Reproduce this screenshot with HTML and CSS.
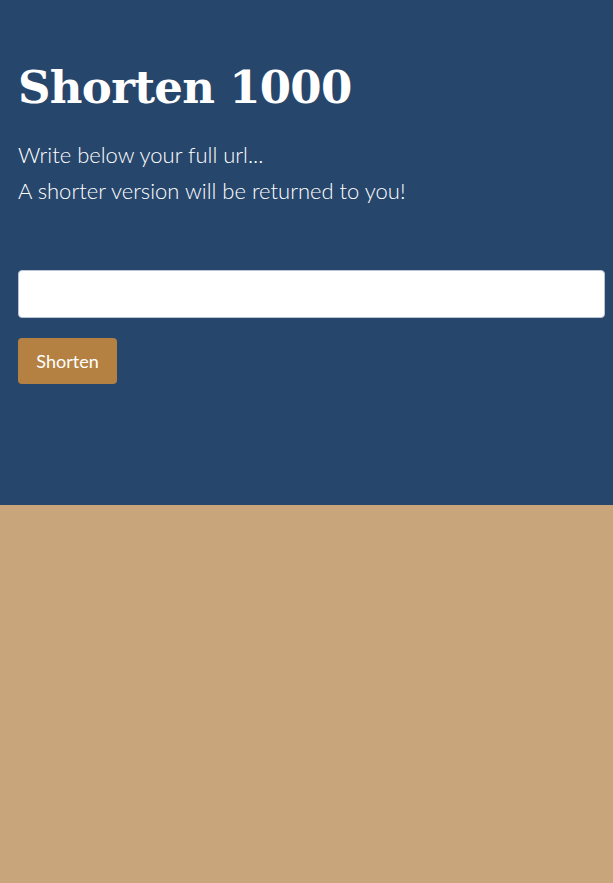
FILE: index.html
```html
<!DOCTYPE html>
<html lang="en">
<head>
<meta charset="utf-8">
<title>Shorten 1000</title>
<link rel="stylesheet" href="styles.css">
</head>
<body>
<section class="hero">
  <h1 class="title">Shorten 1000</h1>
  <p class="lead">Write below your full url...<br>A shorter version will be returned to you!</p>
  <form class="form">
    <input class="url-input" type="text" aria-label="Full url">
    <button class="btn" type="button">Shorten</button>
  </form>
</section>
<section class="rest"></section>
</body>
</html>
```
FILE: styles.css
```css
html, body {
  margin: 0;
  padding: 0;
}
body {
  background: #c8a57b;
  min-height: 883px;
  font-family: "Lato", "Open Sans", sans-serif;
}
.hero {
  background: #27466c;
  height: 505px;
  box-sizing: border-box;
  padding: 56px 8px 0 18px;
  color: #fff;
}
.title {
  margin: 0;
  font-family: "DejaVu Serif", serif;
  font-weight: bold;
  font-size: 45px;
  line-height: 64px;
  letter-spacing: -0.7px;
}
.lead {
  margin: 17px 0 0;
  font-weight: 300;
  font-size: 22px;
  line-height: 36px;
}
.form {
  margin-top: 61px;
  display: flex;
  flex-direction: column;
  align-items: flex-start;
  gap: 20px;
}
.url-input {
  box-sizing: border-box;
  width: 587px;
  height: 48px;
  border: 1px solid #b8c4d4;
  border-radius: 4px;
  background: #fff;
  margin: 0;
}
.btn {
  box-sizing: border-box;
  width: 99px;
  height: 46px;
  border: none;
  border-radius: 4px;
  background: #b58142;
  color: #fff;
  font-family: "Lato", sans-serif;
  font-size: 18px;
  padding: 0;
}
```
